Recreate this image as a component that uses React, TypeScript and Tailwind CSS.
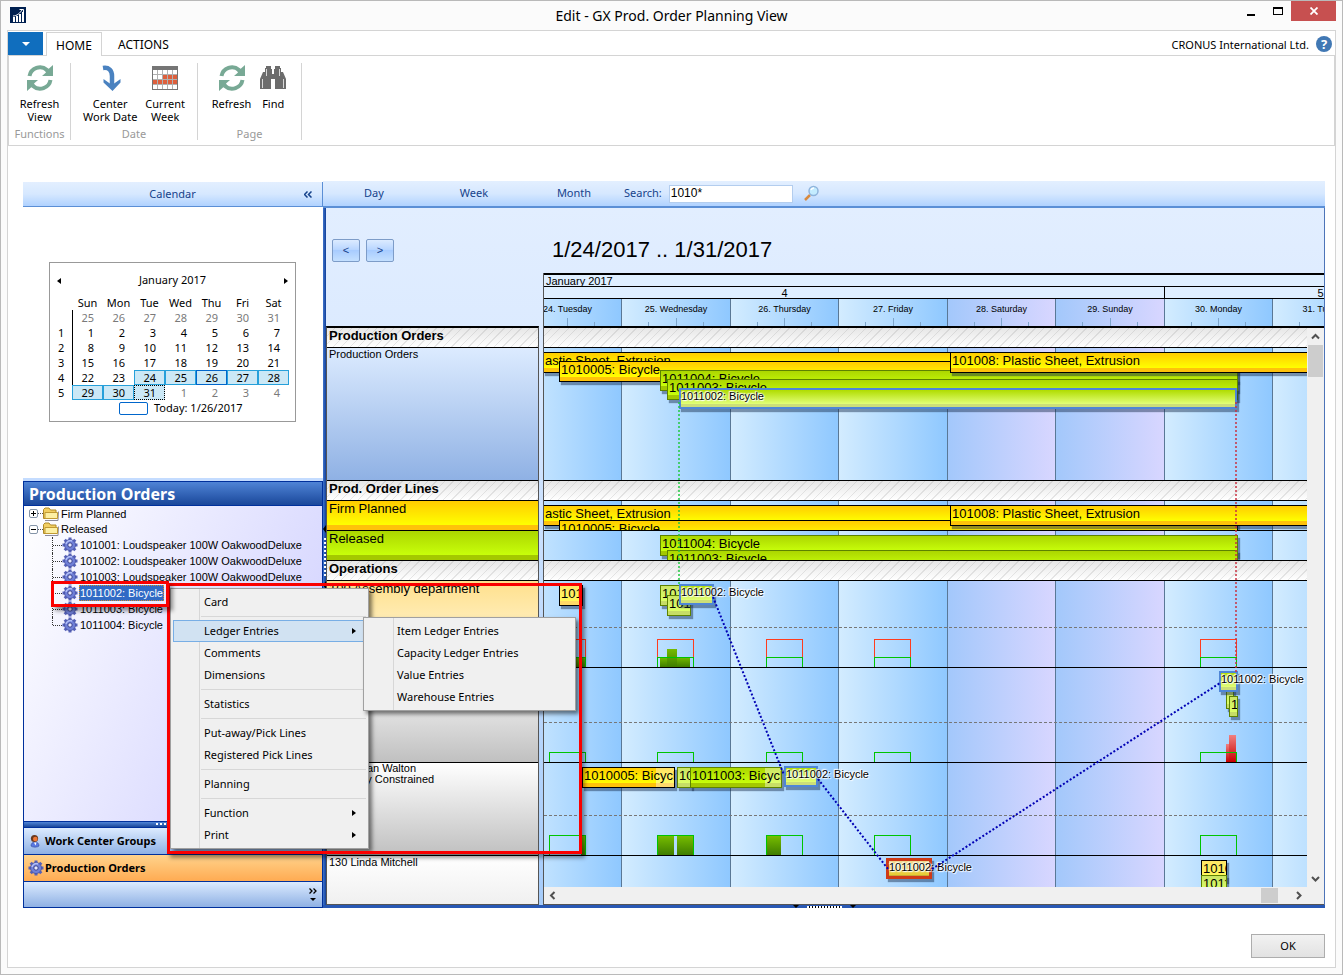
import React from 'react';

type BarKind = 'yellow' | 'yellowLight' | 'green' | 'greenLight' | 'selected' | 'late';

interface BarData {
  x: number;
  y: number;
  w: number;
  kind: BarKind;
  label?: string;
  rest?: number;
}

const barStyles: Record<BarKind, string> = {
  yellow:
    'border border-black bg-[linear-gradient(to_bottom,#ffcc00_0,#ffff00_15px,#ffc20a_15px)] text-[13px] leading-[15px] overflow-hidden',
  yellowLight:
    'border border-black bg-[linear-gradient(to_bottom,#ffe666_0,#fff85a_15px,#ffd966_15px)] text-[13px] leading-[15px] overflow-hidden',
  green:
    'border border-[#5d8200] bg-[linear-gradient(to_bottom,#acd600_0,#c8ff0a_15px,#a4c800_15px)] text-[13px] leading-[15px] overflow-hidden',
  greenLight:
    'border border-[#5d8200] bg-[linear-gradient(to_bottom,#cbe565_0,#dcff66_15px,#c6dd66_15px)] text-[13px] leading-[15px] overflow-hidden',
  selected:
    'border-2 border-[#4f86d6] bg-[linear-gradient(to_bottom,#b0dc00_0,#e2ff78_14px,#ccdf78_14px)] text-[11px] leading-[12px]',
  late: 'border-3 border-[#cf3a16] bg-[linear-gradient(to_bottom,#f0d890_0,#e8cc30_14px,#c8a838_14px)] text-[11px] leading-[12px]',
};

const dayWidths = [
  { name: '24. Tuesday', w: 'w-[108px]', weekend: false },
  { name: '25. Wednesday', w: 'w-[109px]', weekend: false },
  { name: '26. Thursday', w: 'w-[108px]', weekend: false },
  { name: '27. Friday', w: 'w-[109px]', weekend: false },
  { name: '28. Saturday', w: 'w-[108px]', weekend: true },
  { name: '29. Sunday', w: 'w-[109px]', weekend: true },
  { name: '30. Monday', w: 'w-[108px]', weekend: false },
  { name: '31. Tuesday', w: 'w-[109px]', weekend: false },
];

const orderBars: BarData[] = [
  { x: -1, y: 4, w: 408, kind: 'yellow', label: 'astic Sheet, Extrusion' },
  { x: 15, y: 13, w: 679, kind: 'yellow', label: '1010005: Bicycle' },
  { x: 116, y: 22, w: 578, kind: 'green', label: '1011004: Bicycle' },
  { x: 123, y: 31, w: 571, kind: 'green', label: '1011003: Bicycle' },
  { x: 135, y: 40, w: 558, kind: 'selected', label: '1011002: Bicycle' },
  { x: 406, y: 4, w: 400, kind: 'yellow', label: '101008: Plastic Sheet, Extrusion' },
];
const firmBars: BarData[] = [
  { x: -1, y: 4, w: 408, kind: 'yellow', label: 'astic Sheet, Extrusion' },
  { x: 15, y: 19, w: 679, kind: 'yellow', label: '1010005: Bicycle' },
  { x: 406, y: 4, w: 400, kind: 'yellow', label: '101008: Plastic Sheet, Extrusion' },
];
const releasedBars: BarData[] = [
  { x: 116, y: 4, w: 578, kind: 'green', label: '1011004: Bicycle' },
  { x: 123, y: 19, w: 571, kind: 'green', label: '1011003: Bicycle' },
];
const assemblyBars: BarData[] = [
  { x: 15, y: 4, w: 24, kind: 'yellowLight', label: '1010005' },
  { x: 116, y: 4, w: 24, kind: 'greenLight', label: '1011004' },
  { x: 123, y: 14, w: 24, kind: 'greenLight', label: '1011003' },
  { x: 135, y: 3, w: 35, kind: 'selected', label: '1011002: Bicycle' },
];
const secondBars: BarData[] = [
  { x: 682, y: 20, w: 8, kind: 'greenLight' },
  { x: 685, y: 28, w: 9, kind: 'greenLight', label: '1' },
  { x: 675, y: 3, w: 19, kind: 'selected', label: '1011002: Bicycle' },
];
const waltonBars: BarData[] = [
  { x: 38, y: 4, w: 93, kind: 'yellow', label: '1010005: Bicycle', rest: 18 },
  { x: 133, y: 4, w: 15, kind: 'greenLight', label: '1011004' },
  { x: 146, y: 4, w: 92, kind: 'green', label: '1011003: Bicycle', rest: 16 },
  { x: 240, y: 3, w: 34, kind: 'selected', label: '1011002: Bicycle' },
];
const mitchellBars: BarData[] = [
  { x: 342, y: 2, w: 46, kind: 'late', label: '1011002: Bicycle' },
  { x: 657, y: 4, w: 26, kind: 'yellowLight', label: '1010005' },
  { x: 657, y: 19, w: 26, kind: 'greenLight', label: '1011004' },
];

function Bar({ bar }: { bar: BarData }) {
  const halo = bar.kind === 'selected' || bar.kind === 'late';
  return (
    <div
      className={`absolute h-[21px] whitespace-nowrap shadow-[2px_3px_1px_rgba(20,40,70,0.45)] ${barStyles[bar.kind]}`}
      style={{ left: bar.x, top: bar.y, width: bar.w }}
    >
      {bar.rest ? <i className="absolute inset-y-0 right-0 bg-white/40" style={{ width: bar.rest }} /> : null}
      <span
        className={
          halo
            ? 'relative [text-shadow:0_0_2px_#fff,0_0_2px_#fff,1px_1px_1px_#fff,-1px_-1px_1px_#fff]'
            : 'relative px-px'
        }
      >
        {bar.label}
      </span>
    </div>
  );
}

const boxStarts = [5, 113, 222, 330, 656];

interface Load {
  x: number;
  w: number;
  h: number;
}

function Capacity({ height, limit, extra, loads, over }: { height: number; limit: number; extra?: number; loads: Load[]; over?: Load[] }) {
  return (
    <svg className="absolute bottom-0 left-0 w-full" height={height} shapeRendering="crispEdges" aria-hidden="true">
      <defs>
        <linearGradient id="loadFill" x1="0" x2="0" y1="0" y2="1">
          <stop offset="0" stopColor="#76bc00" />
          <stop offset="1" stopColor="#3f7d00" />
        </linearGradient>
        <linearGradient id="overFill" x1="0" x2="0" y1="0" y2="1">
          <stop offset="0" stopColor="#f08080" />
          <stop offset="1" stopColor="#c80000" />
        </linearGradient>
      </defs>
      {loads.map((l, i) => (
        <rect key={i} x={l.x} y={height - l.h} width={l.w} height={l.h} fill="url(#loadFill)" />
      ))}
      {over?.map((l, i) => (
        <rect key={i} x={l.x} y={height - l.h} width={l.w} height={l.h} fill="url(#overFill)" />
      ))}
      {boxStarts.map((x) => (
        <g key={x} fill="none">
          {extra ? (
            <path d={`M${x + 0.5} ${height - limit}V${height - extra + 0.5}H${x + 36.5}V${height - limit}`} stroke="#ff3c1e" />
          ) : null}
          <path d={`M${x + 0.5} ${height}V${height - limit + 0.5}H${x + 36.5}V${height}`} stroke="#00c400" />
        </g>
      ))}
    </svg>
  );
}

const hatch =
  'bg-[repeating-linear-gradient(135deg,transparent_0,transparent_5px,rgba(150,150,150,0.22)_5px,rgba(150,150,150,0.22)_6px),linear-gradient(to_bottom,#e6e6e6,#ffffff)]';

function Refresh() {
  return (
    <svg width="28" height="28" viewBox="0 0 28 28" aria-hidden="true">
      <g fill="none" stroke="#78a995" strokeWidth="4">
        <path d="M3.5 12A10.6 10.6 0 0 1 21 6" />
        <path d="M24.500 16A10.600 10.600 0 0 1 7 22" />
      </g>
      <path d="M27 1v11H16l4-3.500-1.500-2.500 4.500-1.500z" fill="#78a995" />
      <path d="M1 27V16h11l-4 3.500 1.500 2.500-4.500 1.500z" fill="#78a995" />
    </svg>
  );
}

function CenterArrow() {
  return (
    <svg width="28" height="28" viewBox="0 0 28 28" aria-hidden="true">
      <path d="M7 4c6-1 9 2.500 9 8v9" fill="none" stroke="#4a82c0" strokeWidth="4.500" />
      <path d="M7.500 15l8.500 6 8.500-6v3.500L16.500 27 7.500 18.500z" fill="#4a82c0" />
    </svg>
  );
}

function WeekIcon() {
  const cells: React.ReactNode[] = [];
  for (let r = 0; r < 4; r++) {
    for (let c = 0; c < 5; c++) {
      const hot = (r === 1 && c > 1) || r === 2;
      cells.push(<rect key={`${r}-${c}`} x={2 + c * 5} y={6 + r * 5} width="4" height="4" fill={hot ? '#dd5f3c' : '#fff'} />);
    }
  }
  return (
    <svg width="28" height="28" viewBox="0 0 28 28" shapeRendering="crispEdges" aria-hidden="true">
      <rect x="1" y="2" width="26" height="24" fill="#757575" />
      <rect x="2" y="6" width="24" height="19" fill="#b0b0b0" />
      {cells}
    </svg>
  );
}

function Binoculars() {
  return (
    <svg width="28" height="28" viewBox="0 0 28 28" aria-hidden="true">
      <g fill="#6c6c6c">
        <path d="M7 2h5v3h1v7h-1v13H1V15l3-7h2V4h1z" />
        <path d="M21 2h-5v3h-1v7h1v13h11V15l-3-7h-2V4h-1z" />
        <rect x="11" y="10" width="6" height="5" />
      </g>
      <path d="M7.500 5v7M3.500 15v9M20.500 5v7M24.500 15v9" stroke="#d8d8d8" />
      <path d="M13 15h2v10h-2z" fill="#fff" />
    </svg>
  );
}

function Gear() {
  return (
    <svg width="16" height="16" viewBox="0 0 16 16" className="shrink-0" aria-hidden="true">
      <g fill="#5560b8">
        <rect x="6.500" y="0.500" width="3" height="15" />
        <rect x="6.500" y="0.500" width="3" height="15" transform="rotate(45 8 8)" />
        <rect x="6.500" y="0.500" width="3" height="15" transform="rotate(90 8 8)" />
        <rect x="6.500" y="0.500" width="3" height="15" transform="rotate(135 8 8)" />
      </g>
      <circle cx="8" cy="8" r="5.500" fill="#7080d8" stroke="#4650a0" strokeWidth="0.800" />
      <path d="M4 7a4.300 4.300 0 0 1 6-3" fill="none" stroke="#b4c0f8" strokeWidth="1.500" />
      <circle cx="8" cy="8" r="2.200" fill="#e8eaff" stroke="#38408c" />
    </svg>
  );
}

function Folder() {
  return (
    <svg width="16" height="16" viewBox="0 0 16 16" className="shrink-0" aria-hidden="true">
      <path d="M2 14.500h13l.5-9" fill="none" stroke="#8c8c9c" />
      <path d="M.5 12.500v-9L2 2h4l1.500 2H13v8.500z" fill="#f2cf62" stroke="#b08a28" />
      <path d="M2 12.500V6.500h12.500v6z" fill="#fdf0a4" stroke="#c09a34" />
    </svg>
  );
}

function Person() {
  return (
    <svg width="16" height="16" viewBox="0 0 16 16" className="shrink-0" aria-hidden="true">
      <path d="M4 13c0-2.500 1.500-4 4-4s4 1.500 4 4c-1.500 1.500-6.500 1.500-8 0z" fill="#5878e0" stroke="#3048a0" strokeWidth="0.600" />
      <path d="M7 9.500h2.500L8.500 12.500z" fill="#fff" />
      <circle cx="7.500" cy="5.500" r="3.600" fill="#6a3a20" />
      <circle cx="8.300" cy="6" r="2.300" fill="#f07838" />
    </svg>
  );
}

function RibbonButton({ icon, children }: { icon: React.ReactNode; children: React.ReactNode }) {
  return (
    <button className="flex flex-col items-center px-1 text-center leading-[13px]">
      {icon}
      <span className="mt-[5px]">{children}</span>
    </button>
  );
}

const weeks: { n: string; days: number[] }[] = [
  { n: '', days: [25, 26, 27, 28, 29, 30, 31] },
  { n: '1', days: [1, 2, 3, 4, 5, 6, 7] },
  { n: '2', days: [8, 9, 10, 11, 12, 13, 14] },
  { n: '3', days: [15, 16, 17, 18, 19, 20, 21] },
  { n: '4', days: [22, 23, 24, 25, 26, 27, 28] },
  { n: '5', days: [29, 30, 31, 1, 2, 3, 4] },
];

function dayClass(row: number, col: number) {
  if (row === 0 || (row === 5 && col > 2)) return 'text-[#7a7a7a]';
  if (row === 5 && col === 2) return 'bg-[#cbe8f6] outline-1 -outline-offset-1 outline-dotted outline-black';
  if (row === 4 && col === 4) return 'bg-[#cbe8f6] outline-1 -outline-offset-1 outline-[#0066cc]';
  if ((row === 4 && col > 1) || row === 5) return 'bg-[#cbe8f6] outline-1 -outline-offset-1 outline-[#26a0da]';
  return '';
}

function MonthCalendar() {
  return (
    <div className="ml-[26px] w-[247px] border border-[#999] bg-white px-[5px] pb-[4px] text-[11px] text-black">
      <div className="flex h-[32px] items-center justify-between px-[2px] pt-[3px]">
        <button aria-label="Previous month" className="h-0 w-0 border-y-3 border-r-4 border-y-transparent border-r-black" />
        <span>January 2017</span>
        <button aria-label="Next month" className="h-0 w-0 border-y-3 border-l-4 border-y-transparent border-l-black" />
      </div>
      <table className="table-fixed border-collapse leading-[15px]">
        <thead>
          <tr>
            <th className="w-[17px]" aria-label="Week" />
            {['Sun', 'Mon', 'Tue', 'Wed', 'Thu', 'Fri', 'Sat'].map((d) => (
              <th key={d} className="w-[31px] p-0 font-normal">
                {d}
              </th>
            ))}
          </tr>
        </thead>
        <tbody>
          {weeks.map((wk, r) => (
            <tr key={r}>
              <td className="w-[17px] border-r border-black p-0 pl-[3px] text-left">{wk.n}</td>
              {wk.days.map((d, c) => (
                <td key={c} className={`h-[15px] p-0 pr-[9px] text-right ${dayClass(r, c)}`}>
                  {d}
                </td>
              ))}
            </tr>
          ))}
        </tbody>
      </table>
      <div className="flex h-[17px] items-center gap-[6px] pl-[64px]">
        <span className="h-[13px] w-[29px] rounded-xs border border-[#0066cc]" />
        Today: 1/26/2017
      </div>
    </div>
  );
}

const orders = [
  '101001: Loudspeaker 100W OakwoodDeluxe',
  '101002: Loudspeaker 100W OakwoodDeluxe',
  '101003: Loudspeaker 100W OakwoodDeluxe',
  '1011002: Bicycle',
  '1011003: Bicycle',
  '1011004: Bicycle',
];

function Expander({ sign }: { sign: string }) {
  return (
    <button
      aria-label={sign === '+' ? 'Expand' : 'Collapse'}
      className="flex h-[9px] w-[9px] items-center justify-center rounded-xs border border-[#8494a8] bg-white text-black"
    >
      <svg width="5" height="5" shapeRendering="crispEdges" aria-hidden="true">
        <path d={sign === '+' ? 'M0 2.500h5M2.500 0v5' : 'M0 2.500h5'} stroke="#000" />
      </svg>
    </button>
  );
}

function Tree() {
  return (
    <div className="flex-1 border-x border-[#00309c] bg-[linear-gradient(115deg,#ffffff,#ccccff)] font-['Liberation_Sans',Arial,sans-serif] text-[11px] leading-[16px] text-black">
      <div className="flex h-[15px] items-center pl-[5px]">
        <Expander sign="+" />
        <i className="w-[5px] border-t border-dotted border-[#555]" />
        <Folder />
        <span className="pl-[2px]">Firm Planned</span>
      </div>
      <div className="flex h-4 items-center pl-[5px]">
        <Expander sign="-" />
        <i className="w-[5px] border-t border-dotted border-[#555]" />
        <Folder />
        <span className="pl-[2px]">Released</span>
      </div>
      <ul className="pl-[28px]">
        {orders.map((o, i) => (
          <li key={o} className="flex h-4 items-center">
            <i className={i === orders.length - 1 ? 'h-2 self-start border-l border-dotted border-[#333]' : 'h-4 border-l border-dotted border-[#333]'} />
            <i className="w-[9px] border-t border-dotted border-[#333]" />
            <Gear />
            <button
              className={
                i === 3
                  ? 'ml-px bg-[#316ac5] px-px text-white outline-1 -outline-offset-1 outline-dotted outline-[#d09030]'
                  : 'ml-px px-px whitespace-nowrap'
              }
            >
              {o}
            </button>
          </li>
        ))}
      </ul>
    </div>
  );
}

function MenuItem({ label, arrow, active }: { label: string; arrow?: boolean; active?: boolean }) {
  return (
    <button
      role="menuitem"
      className={`flex h-[22px] w-full items-center justify-between pr-[10px] pl-[31px] text-left ${
        active ? 'bg-[#d1e2f2] outline-1 -outline-offset-1 outline-[#78aee5]' : ''
      }`}
    >
      {label}
      {arrow ? <i className="border-y-3 border-l-4 border-y-transparent border-l-black" /> : null}
    </button>
  );
}

const MenuRule = () => <div className="my-[3px] ml-[28px] border-t border-[#d7d7d7]" />;

function ContextMenu() {
  return (
    <div
      role="menu"
      className="absolute top-[407px] left-[147px] w-[199px] border border-[#a0a0a0] bg-[#f0f0f0] bg-[linear-gradient(#d7d7d7,#d7d7d7)] bg-[size:1px_100%] bg-[position:28px_0] bg-no-repeat p-[2px] text-[11px] text-black shadow-[3px_3px_4px_rgba(0,0,0,0.5)]"
    >
      <MenuItem label="Card" />
      <MenuRule />
      <MenuItem label="Ledger Entries" arrow active />
      <MenuItem label="Comments" />
      <MenuItem label="Dimensions" />
      <MenuRule />
      <MenuItem label="Statistics" />
      <MenuRule />
      <MenuItem label="Put-away/Pick Lines" />
      <MenuItem label="Registered Pick Lines" />
      <MenuRule />
      <MenuItem label="Planning" />
      <MenuRule />
      <MenuItem label="Function" arrow />
      <MenuItem label="Print" arrow />
    </div>
  );
}

function SubMenu() {
  return (
    <div
      role="menu"
      className="absolute top-[436px] left-[340px] w-[213px] border border-[#a0a0a0] bg-[#f0f0f0] bg-[linear-gradient(#d7d7d7,#d7d7d7)] bg-[size:1px_100%] bg-[position:29px_0] bg-no-repeat p-[2px] text-[11px] text-black shadow-[3px_3px_4px_rgba(0,0,0,0.5)]"
    >
      <MenuItem label="Item Ledger Entries" />
      <MenuItem label="Capacity Ledger Entries" />
      <MenuItem label="Value Entries" />
      <MenuItem label="Warehouse Entries" />
    </div>
  );
}

function Sidebar() {
  return (
    <aside className="flex w-[300px] shrink-0 flex-col pt-px">
      <div className="flex h-[25px] items-center border-r border-b border-[#5b8fd6] bg-[linear-gradient(to_bottom,#e3efff,#d6e8ff_50%,#b0d2ff)] text-[#15428b]">
        <span className="flex-1 pt-px text-center">Calendar</span>
        <button aria-label="Collapse calendar" className="mr-[10px] -ml-[18px]">
          <svg width="8" height="7" viewBox="0 0 8 7" aria-hidden="true">
            <path d="M3.500.5l-3 3 3 3M7.500.5l-3 3 3 3" fill="none" stroke="#15428b" strokeWidth="1.500" />
          </svg>
        </button>
      </div>
      <div className="h-[271px] pt-[55px]">
        <MonthCalendar />
      </div>
      <div className="h-[3px] bg-[#c4dcff]" />
      <h2 className="flex h-[25px] items-center border border-[#00309c] bg-[linear-gradient(to_bottom,#4f84d6,#1a479a)] pl-[5px] text-[16px] font-bold text-white">
        Production Orders
      </h2>
      <Tree />
      <div className="h-[7px] border border-[#00309c] bg-[linear-gradient(to_bottom,#4f84d6,#1a479a)] text-center">
        <i className="mx-auto mt-px block w-[34px] border-t-2 border-dotted border-white" />
      </div>
      <button className="flex h-[26px] items-center gap-[2px] border-x border-[#00309c] bg-[linear-gradient(to_bottom,#dcebff,#8fb1e4)] pl-[3px] text-[11px] font-bold text-black">
        <Person />
        Work Center Groups
      </button>
      <button className="flex h-[27px] items-center gap-px border border-b-0 border-[#00309c] bg-[linear-gradient(to_bottom,#ffd38c,#ffab52)] pl-[4px] text-[11px] font-bold text-black">
        <Gear />
        Production Orders
      </button>
      <div className="flex h-[27px] items-center justify-end border border-[#00309c] bg-[linear-gradient(to_bottom,#dcebff,#8fb1e4)] pr-[5px]">
        <button aria-label="Configure buttons" className="flex flex-col items-center gap-[4px]">
          <svg width="8" height="6" viewBox="0 0 8 6" aria-hidden="true">
            <path d="M.5.5L3 3 .5 5.500M4.500.5L7 3 4.500 5.500" fill="none" stroke="#000" strokeWidth="1.300" />
          </svg>
          <i className="border-x-3 border-t-3 border-x-transparent border-t-black" />
        </button>
      </div>
    </aside>
  );
}

function DayColumns() {
  return (
    <div className="absolute inset-0 overflow-hidden">
      <div className="-ml-[31px] flex h-full w-max">
        {dayWidths.map((d) => (
          <div
            key={d.name}
            className={`shrink-0 border-l border-[#5a7896] ${d.w} ${
              d.weekend ? 'bg-[linear-gradient(to_right,#a3c8fb,#d8d6ff)]' : 'bg-[linear-gradient(to_right,#d3ecff,#8fc8ff)]'
            }`}
          />
        ))}
      </div>
    </div>
  );
}

function TimeScale() {
  return (
    <div className="border-t-2 border-black bg-[#dfefff] text-[11px] leading-[12px] text-black">
      <div className="h-3 border-b border-black pl-[2px]">January 2017</div>
      <div className="h-3 overflow-hidden border-b border-black">
        <div className="-ml-[139px] flex w-max text-center">
          <div className="h-3 w-[759px]">4</div>
          <div className="h-3 w-[312px] border-l border-black">5</div>
        </div>
      </div>
      <div className="h-[27px] overflow-hidden">
        <div className="-ml-[31px] flex w-max text-center text-[9px]">
          {dayWidths.map((d) => (
            <div
              key={d.name}
              className={`flex h-[27px] shrink-0 flex-col justify-between border-l border-[#5a7896] pt-[4px] ${d.w} ${
                d.weekend ? 'bg-[linear-gradient(to_right,#a3c8fb,#d8d6ff)]' : 'bg-[linear-gradient(to_right,#d3ecff,#8fc8ff)]'
              }`}
            >
              {d.name}
              <div className="flex items-end justify-evenly">
                <i className="h-1 w-px bg-[#7fa6cc]" />
                <i className="h-2 w-px bg-[#7fa6cc]" />
                <i className="h-1 w-px bg-[#7fa6cc]" />
              </div>
            </div>
          ))}
        </div>
      </div>
    </div>
  );
}

function Lane({ h, bars, half, last, children }: { h: string; bars: BarData[]; half?: string; last?: boolean; children?: React.ReactNode }) {
  return (
    <div className={`relative overflow-hidden ${h} ${last ? '' : 'border-b border-black'}`}>
      {half ? <div className={`border-b border-dashed border-[#777] ${half}`} /> : null}
      {children}
      {bars.map((b, i) => (
        <Bar key={i} bar={b} />
      ))}
    </div>
  );
}

function Chart() {
  return (
    <div className="relative h-[559px] min-w-0 flex-1 overflow-hidden text-black">
      <DayColumns />
      <div className={`relative h-5 border-b border-black ${hatch}`} />
      <Lane h="h-[133px]" bars={orderBars} />
      <div className={`relative h-5 border-b border-black ${hatch}`} />
      <Lane h="h-[30px]" bars={firmBars} />
      <Lane h="h-[30px]" bars={releasedBars} />
      <div className={`relative h-5 border-b border-black ${hatch}`} />
      <Lane h="h-[87px]" half="h-[47px]" bars={assemblyBars}>
        <Capacity
          height={30}
          limit={10}
          extra={28}
          loads={[
            { x: 26, w: 15, h: 10 },
            { x: 116, w: 30, h: 10 },
            { x: 123, w: 10, h: 18 },
          ]}
        />
      </Lane>
      <Lane h="h-[95px]" half="h-[55px]" bars={secondBars}>
        <Capacity
          height={30}
          limit={10}
          loads={[]}
          over={[
            { x: 682, w: 10, h: 18 },
            { x: 685, w: 7, h: 27 },
          ]}
        />
      </Lane>
      <Lane h="h-[93px]" half="h-[53px]" bars={waltonBars}>
        <Capacity
          height={30}
          limit={20}
          loads={[
            { x: 37, w: 4, h: 19 },
            { x: 114, w: 16, h: 19 },
            { x: 133, w: 17, h: 19 },
            { x: 223, w: 14, h: 19 },
          ]}
        />
      </Lane>
      <Lane h="h-[31px]" bars={mitchellBars} last />
      <svg className="pointer-events-none absolute inset-0 h-full w-full" fill="none" strokeWidth="2" aria-hidden="true">
        <path d="M135 74V258" stroke="#20c840" strokeDasharray="2 2" strokeOpacity="0.75" />
        <path d="M692 74V345" stroke="#c83040" strokeDasharray="2 2" strokeOpacity="0.75" />
        <g stroke="#0000b4" strokeDasharray="2 2">
          <path d="M169 269L240 447" />
          <path d="M274 451L344 541" />
          <path d="M388 541L676 355" />
        </g>
      </svg>
    </div>
  );
}

function Chevron({ d }: { d: string }) {
  return (
    <svg width="9" height="9" viewBox="0 0 9 9" aria-hidden="true">
      <path d={d} fill="none" stroke="#505050" strokeWidth="2" />
    </svg>
  );
}

function RowHeadings() {
  return (
    <div className="flex flex-1 flex-col border-x border-t-2 border-b border-x-[#555] border-t-black border-b-[#555] text-[11px] leading-[12px] text-black">
      <div className={`h-5 border-b border-black pl-[2px] text-[13px] leading-[16px] font-bold ${hatch}`}>Production Orders</div>
      <div className="h-[133px] border-b border-black bg-[linear-gradient(to_bottom,#dcebff,#8fb1e4)] pl-[2px]">Production Orders</div>
      <div className={`h-5 border-b border-black pl-[2px] text-[13px] leading-[16px] font-bold ${hatch}`}>Prod. Order Lines</div>
      <div className="h-[30px] border-b border-black bg-[linear-gradient(to_bottom,#ffcc00_0,#ffff00_24px,#ffc20a_24px)] pl-[2px] text-[13px] leading-[15px]">
        Firm Planned
      </div>
      <div className="h-[30px] border-b border-black bg-[linear-gradient(to_bottom,#acd600_0,#c8ff0a_24px,#a4c800_24px)] pl-[2px] text-[13px] leading-[15px]">
        Released
      </div>
      <div className={`h-5 border-b border-black pl-[2px] text-[13px] leading-[16px] font-bold ${hatch}`}>Operations</div>
      <div className="h-[87px] border-b border-black bg-[linear-gradient(to_bottom,#ffe08c,#fffbe8)] pl-[2px] text-[13px] leading-[15px]">
        100 Assembly department
      </div>
      <div className="h-[95px] border-b border-black bg-[linear-gradient(to_bottom,#ffffff,#c0c0c0)]" />
      <div className="h-[93px] border-b border-black bg-[linear-gradient(to_bottom,#ffffff,#c0c0c0)] pl-[2px] leading-[11px]">
        120 Bryan Walton
        <br />
        Capacity Constrained
      </div>
      <div className="flex-1 bg-[linear-gradient(to_bottom,#ffffff,#f0f0f0)] pl-[2px]">130 Linda Mitchell</div>
    </div>
  );
}

function Planner() {
  return (
    <section className="flex min-w-0 flex-1 flex-col">
      <div className="flex h-[27px] items-center border-b-2 border-[#5b8fd6] bg-[linear-gradient(to_bottom,#e3efff,#d6e8ff_50%,#b0d2ff)] pl-px text-[#15428b]">
        <button className="w-[100px]">Day</button>
        <button className="w-[100px]">Week</button>
        <button className="w-[100px]">Month</button>
        <label htmlFor="search" className="mr-[7px]">
          Search:
        </label>
        <input
          id="search"
          defaultValue="1010*"
          className="h-[18px] w-[124px] border border-[#b3cdee] bg-white px-px pb-[2px] font-['Liberation_Sans',Arial,sans-serif] text-[12px] text-black"
        />
        <button aria-label="Find" className="ml-[10px]">
          <svg width="17" height="17" viewBox="0 0 17 17" aria-hidden="true">
            <path d="M2 15l5-5" stroke="#d88a40" strokeWidth="2.500" />
            <circle cx="10.500" cy="6" r="4.500" fill="#c4ecff" stroke="#8fb4dc" strokeWidth="1.500" />
            <path d="M8 5a3 3 0 0 1 3-2" stroke="#fff" strokeWidth="1.500" fill="none" />
          </svg>
        </button>
      </div>
      <div className="flex flex-1 border-r border-[#4d74b8] bg-[linear-gradient(to_bottom,#e2eeff,#dbeaff_20%,#a6ccfa)] font-['Liberation_Sans',Arial,sans-serif]">
        <div className="flex w-[3px] flex-col items-center justify-center gap-[5px] bg-[linear-gradient(to_right,#3f74cc,#123f98)]">
          <i className="border-y-4 border-r-3 border-y-transparent border-r-black" />
          <i className="h-[38px] border-l-2 border-dotted border-white" />
          <i className="border-y-4 border-r-3 border-y-transparent border-r-black" />
        </div>
        <div className="flex w-[213px] shrink-0 flex-col">
          <div className="flex h-[118px] gap-[6px] pt-[31px] pl-[6px]">
            {['<', '>'].map((s) => (
              <button
                key={s}
                aria-label={s === '<' ? 'Previous period' : 'Next period'}
                className="h-[23px] w-[28px] rounded-xs border border-[#7d9cc8] bg-[linear-gradient(to_bottom,#dcebff,#b9d6ff_45%,#a8ccff_50%,#c4e0ff)] text-[11px] leading-none text-[#15428b]"
              >
                {s}
              </button>
            ))}
          </div>
          <RowHeadings />
        </div>
        <div className="ml-[4px] flex min-w-0 flex-1 flex-col">
          <h1 className="h-[65px] pt-[28px] pl-[9px] text-[22px] leading-[28px] text-black">1/24/2017 .. 1/31/2017</h1>
          <div className="flex flex-1 flex-col border-b border-l border-[#555]">
            <TimeScale />
            <div className="flex border-t-2 border-black">
              <Chart />
              <div className="flex w-[17px] flex-col items-center bg-[#f0f0f0]">
                <button aria-label="Scroll up" className="flex h-[17px] w-full items-center justify-center">
                  <Chevron d="M1 6.500L4.500 3L8 6.500" />
                </button>
                <div className="h-[32px] w-[15px] bg-[#cdcdcd]" />
                <div className="flex-1" />
                <button aria-label="Scroll down" className="flex h-[17px] w-full items-center justify-center">
                  <Chevron d="M1 3L4.500 6.500L8 3" />
                </button>
              </div>
            </div>
            <div className="flex h-[17px] items-center bg-[#f0f0f0] pr-[17px]">
              <button aria-label="Scroll left" className="flex h-full w-[17px] items-center justify-center">
                <Chevron d="M6.500 1L3 4.500L6.500 8" />
              </button>
              <div className="flex-1" />
              <div className="h-[15px] w-[17px] bg-[#cdcdcd]" />
              <button aria-label="Scroll right" className="ml-[12px] flex h-full w-[17px] items-center justify-center">
                <Chevron d="M3 1L6.500 4.500L3 8" />
              </button>
            </div>
          </div>
        </div>
      </div>
      <div className="flex h-[3px] items-center justify-center gap-[8px] bg-[#2858b4]">
        <i className="border-x-3 border-t-3 border-x-transparent border-t-black" />
        <i className="h-[2px] w-[35px] bg-[repeating-linear-gradient(to_right,#fff_0,#fff_2px,#000_2px,#000_3px)]" />
        <i className="border-x-3 border-t-3 border-x-transparent border-t-black" />
      </div>
    </section>
  );
}

export default function App() {
  return (
    <div className="flex min-h-screen flex-col border border-[#b9b9b9] bg-[#fbfbfb] px-[6px] pb-[6px] font-['Noto_Sans',sans-serif] text-[11px] text-black">
      <header className="relative flex h-[29px] shrink-0 items-center justify-center">
        <svg className="absolute top-[6px] left-[3px]" width="16" height="16" viewBox="0 0 16 16" aria-hidden="true">
          <rect width="16" height="16" fill="#002050" />
          <path d="M3 10h2v5H3zM6 9h2v6H6zM9 7h2v8H9zM12 5h2v10h-2z" fill="#fff" />
          <path d="M3 9c4 0 7-3 9-6M9.500 2.500h4v4" fill="none" stroke="#fff" />
        </svg>
        <span className="text-[14px]">Edit - GX Prod. Order Planning View</span>
        <div className="absolute top-0 right-0 flex h-5 items-center">
          <button aria-label="Minimize" className="mr-[18px] h-[10px] w-[8px] border-b-2 border-black" />
          <button aria-label="Maximize" className="mr-[8px] h-[8px] w-[10px] border border-t-2 border-black" />
          <button aria-label="Close" className="flex h-5 w-[45px] items-center justify-center bg-[#c75050]">
            <svg width="8" height="8" viewBox="0 0 8 8" aria-hidden="true">
              <path d="M.5.5l7 7M7.500.5l-7 7" stroke="#fff" strokeWidth="1.800" />
            </svg>
          </button>
        </div>
      </header>
      <div className="flex flex-1 flex-col border border-[#d4d4d4] bg-white">
        <nav className="flex h-[24px] shrink-0 items-end">
          <button aria-label="Application menu" className="mr-[3px] flex h-[23px] w-[35px] items-center justify-center bg-[#106ebe]">
            <i className="border-x-4 border-t-4 border-x-transparent border-t-white" />
          </button>
          <button className="relative z-10 -mb-px h-[24px] w-[56px] border border-b-0 border-[#d4d4d4] bg-white pt-[2px] text-[12px]">
            HOME
          </button>
          <button className="h-[23px] px-[16px] pt-[3px] text-[12px]">ACTIONS</button>
          <div className="flex-1" />
          <span className="flex h-[23px] items-center pt-[3px] text-[11px]">CRONUS International Ltd.</span>
          <button aria-label="Help" className="mr-[3px] mb-[3px] ml-[7px] flex h-4 w-4 items-center justify-center rounded-full bg-[#4178b4] text-[13px] leading-none font-bold text-white">
            ?
          </button>
        </nav>
        <div className="flex h-[91px] shrink-0 border border-[#d4d4d4] pt-[7px]">
          <div className="flex h-[77px] w-[62px] flex-col items-center border-r border-[#d4d4d4] pt-px">
            <div className="flex flex-1 items-start">
              <RibbonButton icon={<Refresh />}>
                Refresh
                <br />
                View
              </RibbonButton>
            </div>
            <span className="leading-[12px] text-[#999]">Functions</span>
          </div>
          <div className="flex h-[77px] w-[127px] flex-col items-center border-r border-[#d4d4d4] pt-px">
            <div className="flex flex-1 items-start">
              <RibbonButton icon={<CenterArrow />}>
                Center
                <br />
                Work Date
              </RibbonButton>
              <RibbonButton icon={<WeekIcon />}>
                Current
                <br />
                Week
              </RibbonButton>
            </div>
            <span className="leading-[12px] text-[#999]">Date</span>
          </div>
          <div className="flex h-[77px] w-[104px] flex-col items-center border-r border-[#d4d4d4] pt-px">
            <div className="flex flex-1 items-start">
              <RibbonButton icon={<Refresh />}>Refresh</RibbonButton>
              <RibbonButton icon={<Binoculars />}>Find</RibbonButton>
            </div>
            <span className="leading-[12px] text-[#999]">Page</span>
          </div>
        </div>
        <main className="flex flex-1 flex-col pt-[35px] pr-[10px] pb-[9px] pl-[15px]">
          <div className="relative flex">
            <Sidebar />
            <Planner />
            <ContextMenu />
            <SubMenu />
            <div className="pointer-events-none absolute top-[402px] left-[144px] h-[271px] w-[415px] border-3 border-[#fa0000] shadow-[3px_4px_4px_rgba(0,0,0,0.4)]" />
            <div className="pointer-events-none absolute top-[400px] left-[28px] h-[26px] w-[118px] border-3 border-[#fa0000] shadow-[4px_4px_4px_rgba(0,0,0,0.4)]" />
          </div>
          <div className="flex flex-1 items-end justify-end">
            <button className="h-[24px] w-[74px] border border-[#adadad] bg-[linear-gradient(to_bottom,#f2f2f2,#e2e2e2)]">OK</button>
          </div>
        </main>
      </div>
    </div>
  );
}
